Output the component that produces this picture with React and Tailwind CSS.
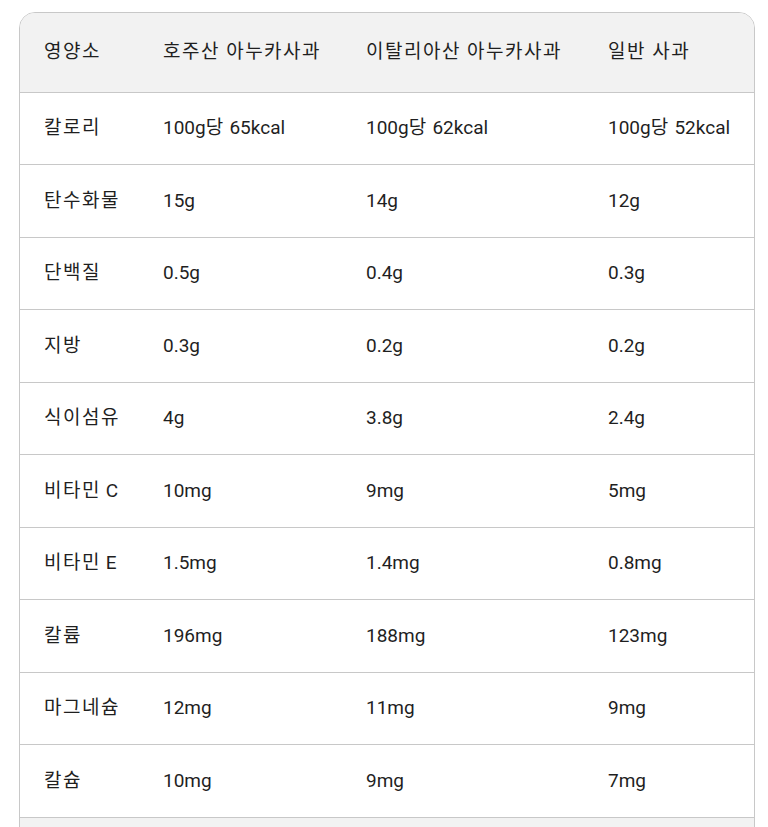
import React from 'react';

const rows = [
  ['칼로리', '100g당 65kcal', '100g당 62kcal', '100g당 52kcal'],
  ['탄수화물', '15g', '14g', '12g'],
  ['단백질', '0.5g', '0.4g', '0.3g'],
  ['지방', '0.3g', '0.2g', '0.2g'],
  ['식이섬유', '4g', '3.8g', '2.4g'],
  ['비타민 C', '10mg', '9mg', '5mg'],
  ['비타민 E', '1.5mg', '1.4mg', '0.8mg'],
  ['칼륨', '196mg', '188mg', '123mg'],
  ['마그네슘', '12mg', '11mg', '9mg'],
  ['칼슘', '10mg', '9mg', '7mg'],
];

const headers = ['영양소', '호주산 아누카사과', '이탈리아산 아누카사과', '일반 사과'];

// hangul runs get a little extra tracking, latin stays as is
const Text = ({ value }) =>
  value.split(/([가-힣]+(?: [가-힣]+)*)/).map((part, i) =>
    /[가-힣]/.test(part) ? (
      <span key={i} className="tracking-[1.5px]">{part}</span>
    ) : (
      <span key={i}>{part}</span>
    )
  );

export default function App() {
  return (
    <div
      className="bg-white min-h-screen pt-3 pl-[19px] pr-[13px] text-[#1f1f1f]"
      style={{ fontFamily: 'Roboto, "Noto Sans CJK KR", sans-serif' }}
    >
      <div className="border border-[#c8c8c8] rounded-t-2xl overflow-hidden">
        <table className="w-full border-collapse table-fixed text-[19px] leading-6">
          <colgroup>
            <col className="w-[119px]" />
            <col className="w-[203px]" />
            <col className="w-[242px]" />
            <col />
          </colgroup>
          <thead>
            <tr className="bg-[#f2f2f2]">
              {headers.map((h) => (
                <th key={h} className="text-left font-normal pl-6 pr-1 h-[79px] align-middle whitespace-nowrap">
                  <Text value={h} />
                </th>
              ))}
            </tr>
          </thead>
          <tbody>
            {rows.map((r, i) => (
              <tr key={i} className="border-t border-[#c8c8c8]">
                {r.map((c, j) => (
                  <td key={j} className="pl-6 pr-1 h-[72.5px] align-middle whitespace-nowrap">
                    <Text value={c} />
                  </td>
                ))}
              </tr>
            ))}
          </tbody>
        </table>
        <div className="border-t border-[#c8c8c8] bg-[#f2f2f2] h-[60px]" />
      </div>
    </div>
  );
}
